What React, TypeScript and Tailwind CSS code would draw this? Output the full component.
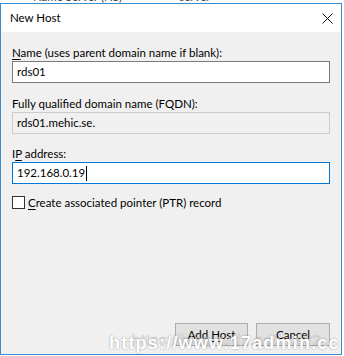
import React from 'react';

const UI = { fontFamily: 'Lato, "Noto Sans", sans-serif' };

function Field({ label, accel, value, variant }: { label: string; accel: number; value: string; variant: 'edit' | 'readonly' | 'focus' }) {
  const box =
    variant === 'readonly'
      ? 'bg-[#f0f0f0] border-[#cccccc]'
      : variant === 'focus'
      ? 'bg-white border-[#0078d7]'
      : 'bg-white border-[#7a7a7a]';
  return (
    <div className="flex flex-col">
      <div className="text-[11.5px] leading-[16px] text-black h-[16px]">
        {accel >= 0 ? (
          <>
            {label.slice(0, accel)}
            <span className="underline underline-offset-2">{label[accel]}</span>
            {label.slice(accel + 1)}
          </>
        ) : (
          label
        )}
      </div>
      <div className={`h-[22px] border ${box} flex items-center px-[4px] text-[11.5px] text-black`}>
        {value}
        {variant === 'focus' && <span className="w-px h-[15px] bg-black ml-px" />}
      </div>
    </div>
  );
}

export default function App() {
  return (
    <div className="w-[344px] h-[356px] bg-white overflow-hidden relative" style={UI}>
      {/* sliver of the window behind */}
      <div className="h-[3px] overflow-hidden relative">
        <div className="absolute left-[33px] top-[-12px] text-[11.5px] text-[#444] flex gap-[57px]">
          <span>Name Server (NS)</span>
          <span>server</span>
        </div>
      </div>
      <div className="w-[342px] h-[352px] border border-[#3f8ccb] bg-[#f0f0f0] flex flex-col">
        <div className="h-[28px] bg-white flex items-center justify-between pl-[9px] pr-[8px] shrink-0">
          <span className="text-[11.5px] text-black">New Host</span>
          <svg width="11" height="11" viewBox="0 0 11 11">
            <path d="M0.5 0.5 L10.5 10.5 M10.5 0.5 L0.5 10.5" stroke="#111" strokeWidth="1" />
          </svg>
        </div>
        <div className="flex-1 flex flex-col px-[11px] pt-[13px]">
          <Field label="Name (uses parent domain name if blank):" accel={0} value="rds01" variant="edit" />
          <div className="mt-[13px]">
            <Field label="Fully qualified domain name (FQDN):" accel={-1} value="rds01.mehic.se." variant="readonly" />
          </div>
          <div className="mt-[12px]">
            <Field label="IP address:" accel={1} value="192.168.0.19" variant="focus" />
          </div>
          <div className="mt-[10px] flex items-center gap-[3px]">
            <div className="w-[13px] h-[13px] border border-[#333] bg-white" />
            <span className="text-[11.5px] text-black">
              <span className="underline underline-offset-2">C</span>reate associated pointer (PTR) record
            </span>
          </div>
          <div className="flex-1" />
          <div className="flex justify-end gap-[8px] pb-[8px]">
            <button className="w-[73px] h-[23px] bg-[#e1e1e1] border border-[#adadad] text-[11.5px] text-black">
              Add <span className="underline underline-offset-2">H</span>ost
            </button>
            <button className="w-[74px] h-[23px] bg-[#e1e1e1] border border-[#adadad] text-[11.5px] text-black">
              Cancel
            </button>
          </div>
        </div>
      </div>
      {/* watermarks */}
      <div
        className="absolute left-[132px] top-[329px] text-[15px] text-white/60 tracking-[0.5px]"
        style={{ fontFamily: '"Liberation Sans", sans-serif', WebkitTextStroke: '0.5px rgba(120,120,120,0.45)' }}
      >
        https://blog.csdn.net/...ay2
      </div>
      <div
        className="absolute left-[109px] top-[333px] text-[18px] font-bold text-white tracking-[1.2px] leading-[20px]"
        style={{ fontFamily: '"Liberation Sans", sans-serif', textShadow: '0 0 2px rgba(0,0,0,0.4)' }}
      >
        https://www.17admin.cc
      </div>
    </div>
  );
}
